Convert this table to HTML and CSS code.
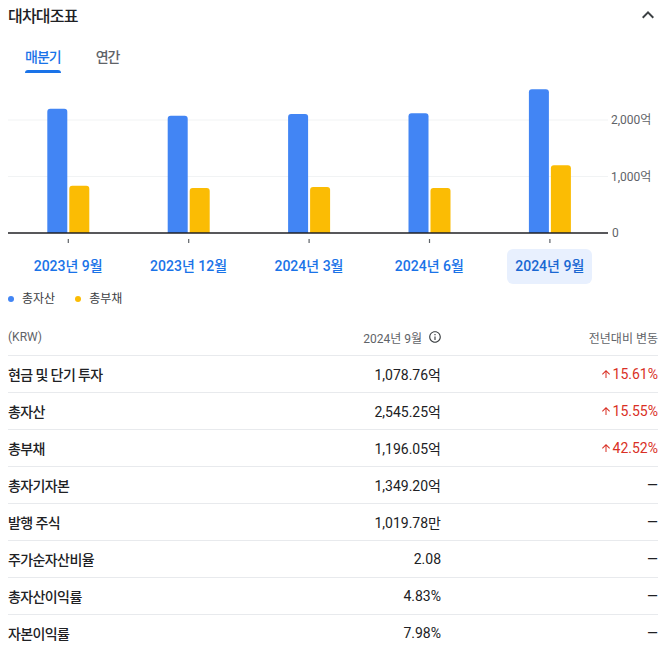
FILE: index.html
```html
<!DOCTYPE html>
<html lang="ko">
<head>
<meta charset="utf-8">
<title>대차대조표</title>
<link rel="stylesheet" href="styles.css">
</head>
<body>
<div class="card">
  <div class="head">
    <div class="title">대차대조표</div>
    <svg class="chev" viewBox="0 0 24 24"><path d="M12 8l-6 6 1.41 1.41L12 10.83l4.59 4.58L18 14z"/></svg>
  </div>
  <div class="tabs">
    <div class="tab active">매분기</div>
    <div class="tab">연간</div>
  </div>
  <svg class="chart" viewBox="0 0 647 172">
    <line class="grid" x1="0" y1="46" x2="600" y2="46"/>
    <line class="grid" x1="0" y1="102.5" x2="600" y2="102.5"/>
    <path class="blue" d="M39.3 159V37.7Q39.3 34.7 42.3 34.7H56.3Q59.3 34.7 59.3 37.7V159Z"/>
    <path class="yellow" d="M61.3 159V114.7Q61.3 111.7 64.3 111.7H78.3Q81.3 111.7 81.3 114.7V159Z"/>
    <path class="blue" d="M159.7 159V44.7Q159.7 41.7 162.7 41.7H176.7Q179.7 41.7 179.7 44.7V159Z"/>
    <path class="yellow" d="M181.7 159V117Q181.7 114 184.7 114H198.7Q201.7 114 201.7 117V159Z"/>
    <path class="blue" d="M280.1 159V43Q280.1 40 283.1 40H297.1Q300.1 40 300.1 43V159Z"/>
    <path class="yellow" d="M302.1 159V116Q302.1 113 305.1 113H319.1Q322.1 113 322.1 116V159Z"/>
    <path class="blue" d="M400.5 159V42.3Q400.5 39.3 403.5 39.3H417.5Q420.5 39.3 420.5 42.3V159Z"/>
    <path class="yellow" d="M422.5 159V117Q422.5 114 425.5 114H439.5Q442.5 114 442.5 117V159Z"/>
    <path class="blue" d="M520.9 159V18.3Q520.9 15.3 523.9 15.3H537.9Q540.9 15.3 540.9 18.3V159Z"/>
    <path class="yellow" d="M542.9 159V94.3Q542.9 91.3 545.9 91.3H559.9Q562.9 91.3 562.9 94.3V159Z"/>
    <line class="axis" x1="0" y1="159" x2="600" y2="159"/>
    <line class="tick" x1="60.3" y1="165" x2="60.3" y2="169"/>
    <line class="tick" x1="180.7" y1="165" x2="180.7" y2="169"/>
    <line class="tick" x1="301.1" y1="165" x2="301.1" y2="169"/>
    <line class="tick" x1="421.5" y1="165" x2="421.5" y2="169"/>
    <line class="tick" x1="541.9" y1="165" x2="541.9" y2="169"/>
    <text class="ylab" x="603" y="50">2,000억</text>
    <text class="ylab" x="603" y="106.5">1,000억</text>
    <text class="ylab" x="604" y="163">0</text>
  </svg>
  <div class="xlabels">
    <div class="xlabel"><span>2023년 9월</span></div>
    <div class="xlabel"><span>2023년 12월</span></div>
    <div class="xlabel"><span>2024년 3월</span></div>
    <div class="xlabel"><span>2024년 6월</span></div>
    <div class="xlabel sel"><span>2024년 9월</span></div>
  </div>
  <div class="legend">
    <div class="legend-item"><i class="dot dot-blue"></i>총자산</div>
    <div class="legend-item"><i class="dot dot-yellow"></i>총부채</div>
  </div>
  <div class="fin">
    <div class="row head-row">
      <div>(KRW)</div>
      <div class="val val-head">2024년 9월
        <svg class="info" viewBox="0 0 24 24"><path d="M11 7h2v2h-2zm0 4h2v6h-2zm1-9C6.48 2 2 6.48 2 12s4.48 10 10 10 10-4.48 10-10S17.52 2 12 2zm0 18c-4.41 0-8-3.59-8-8s3.590-8 8-8 8 3.59 8 8-3.59 8-8 8z"/></svg>
      </div>
      <div class="chg-head">전년대비 변동</div>
    </div>
    <div class="row">
      <div class="lbl">현금 및 단기 투자</div>
      <div class="val">1,078.76억</div>
      <div class="chg up"><svg class="arrow" viewBox="0 0 24 24"><path d="M4 12l1.41 1.41L11 7.83V20h2V7.83l5.58 5.59L20 12l-8-8-8 8z"/></svg>15.61%</div>
    </div>
    <div class="row">
      <div class="lbl">총자산</div>
      <div class="val">2,545.25억</div>
      <div class="chg up"><svg class="arrow" viewBox="0 0 24 24"><path d="M4 12l1.41 1.41L11 7.83V20h2V7.83l5.58 5.59L20 12l-8-8-8 8z"/></svg>15.55%</div>
    </div>
    <div class="row">
      <div class="lbl">총부채</div>
      <div class="val">1,196.05억</div>
      <div class="chg up"><svg class="arrow" viewBox="0 0 24 24"><path d="M4 12l1.41 1.41L11 7.83V20h2V7.83l5.58 5.59L20 12l-8-8-8 8z"/></svg>42.52%</div>
    </div>
    <div class="row">
      <div class="lbl">총자기자본</div>
      <div class="val">1,349.20억</div>
      <div class="chg">—</div>
    </div>
    <div class="row">
      <div class="lbl">발행 주식</div>
      <div class="val">1,019.78만</div>
      <div class="chg">—</div>
    </div>
    <div class="row">
      <div class="lbl">주가순자산비율</div>
      <div class="val">2.08</div>
      <div class="chg">—</div>
    </div>
    <div class="row">
      <div class="lbl">총자산이익률</div>
      <div class="val">4.83%</div>
      <div class="chg">—</div>
    </div>
    <div class="row last">
      <div class="lbl">자본이익률</div>
      <div class="val">7.98%</div>
      <div class="chg">—</div>
    </div>
  </div>
</div>
</body>
</html>
```
FILE: styles.css
```css
body {
  margin: 0;
  background: #fff;
  color: #202124;
  font-family: Roboto, "Noto Sans CJK KR", sans-serif;
}
.card {
  padding: 0 5px 0 8px;
}
.head {
  display: flex;
  justify-content: space-between;
  align-items: center;
  height: 30px;
}
.title {
  font-size: 16px;
  font-weight: 500;
  letter-spacing: -0.8px;
}
.chev {
  width: 24px;
  height: 24px;
  margin-right: -2px;
  fill: #3c4043;
}
.tabs {
  display: flex;
  gap: 35px;
  padding-left: 17px;
  height: 44px;
}
.tab {
  padding-top: 17px;
  font-size: 14px;
  line-height: 20px;
  font-weight: 500;
  color: #5f6368;
  letter-spacing: -1px;
}
.tab.active {
  color: #1a73e8;
}
.tab.active::after {
  content: "";
  display: block;
  margin-top: 3px;
  height: 3px;
  border-radius: 3px 3px 0 0;
  background: #1a73e8;
}
.chart {
  display: block;
  width: 647px;
  height: 172px;
}
.chart .grid {
  stroke: #f1f3f4;
  stroke-width: 1;
}
.chart .axis {
  stroke: #202124;
  stroke-width: 1.3;
}
.chart .tick {
  stroke: #5f6368;
  stroke-width: 1.2;
}
.chart .blue {
  fill: #4285f4;
}
.chart .yellow {
  fill: #fbbc04;
}
.chart .ylab {
  font-family: Roboto, "Noto Sans CJK KR", sans-serif;
  font-size: 12px;
  fill: #5f6368;
}
.xlabels {
  display: grid;
  grid-template-columns: repeat(5, 120.4px);
  margin-top: 3px;
  height: 35px;
}
.xlabel {
  display: flex;
  justify-content: center;
}
.xlabel span {
  height: 35px;
  line-height: 35px;
  padding: 0 8px;
  border-radius: 6px;
  font-size: 14px;
  font-weight: 500;
  color: #1a73e8;
}
.xlabel.sel span {
  background: #e8f0fe;
  color: #1967d2;
}
.legend {
  display: flex;
  gap: 20px;
  margin-top: 7px;
  font-size: 12px;
  line-height: 16px;
  color: #3c4043;
}
.legend-item {
  display: flex;
  align-items: center;
  gap: 8px;
}
.dot {
  width: 6px;
  height: 6px;
  border-radius: 50%;
}
.dot-blue {
  background: #4285f4;
}
.dot-yellow {
  background: #fbbc04;
}
.fin {
  margin-top: 12px;
}
.row {
  display: grid;
  grid-template-columns: 1fr 200px 217px;
  align-items: center;
  height: 36px;
  border-bottom: 1px solid #e8eaed;
  font-size: 14px;
  font-weight: 500;
}
.row.last {
  border-bottom: none;
}
.head-row {
  font-size: 12px;
  font-weight: 400;
  color: #5f6368;
}
.lbl {
  letter-spacing: -0.6px;
}
.val {
  text-align: right;
  font-weight: 400;
}
.val-head {
  display: flex;
  justify-content: flex-end;
  align-items: center;
  gap: 6px;
  margin-right: -1px;
}
.info {
  width: 14px;
  height: 14px;
  fill: #3c4043;
}
.chg-head {
  text-align: right;
}
.chg {
  display: flex;
  justify-content: flex-end;
  align-items: center;
  font-weight: 400;
}
.chg.up {
  color: #d93025;
}
.arrow {
  width: 12px;
  height: 12px;
  margin-right: 1px;
  fill: #d93025;
}
```
